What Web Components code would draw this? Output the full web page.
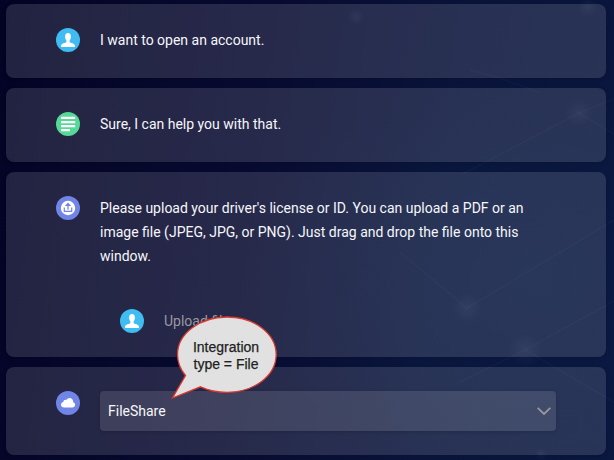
<!DOCTYPE html>
<html lang="en"><head><meta charset="utf-8"><title>Chat</title>
<style>body{margin:0;overflow:hidden}</style></head><body>
<chat-window>
<chat-card><chat-avatar kind="user"></chat-avatar><chat-text>I want to open an account.</chat-text></chat-card>
<chat-card><chat-avatar kind="bot"></chat-avatar><chat-text>Sure, I can help you with that.</chat-text></chat-card>
<chat-card style="--h:185px"><chat-avatar kind="upload"></chat-avatar><chat-text>Please upload your driver's license or ID. You can upload a PDF or an image file (JPEG, JPG, or PNG). Just drag and drop the file onto this window.<upload-row slot="extra">Upload file</upload-row></chat-text></chat-card>
<chat-card style="--h:88px"><chat-avatar kind="cloud"></chat-avatar><share-select>FileShare</share-select></chat-card>
<callout-bubble slot="overlay">Integration<br>type = File</callout-bubble>
</chat-window>
<script>
const define = (name, html, setup) => customElements.define(name, class extends HTMLElement {
  constructor() {
    super();
    this.attachShadow({mode: 'open'}).innerHTML = html;
  }
  connectedCallback() { if (setup) setup(this); }
});

define('chat-window', `<style>
:host{display:block;position:relative;box-sizing:border-box;width:614px;height:460px;overflow:hidden;color:#f6f7fa;font:14px/24px Roboto,sans-serif;
background:linear-gradient(97deg,#020325 0,#050629 10%,#080b31 40%,#0a143b 70%,#0a163e 100%)}
.sky{position:absolute;inset:0}
.list{position:relative;display:flex;flex-direction:column;gap:10px;padding:4px 8px 0 6px}
</style>
<svg class="sky" width="614" height="460" viewBox="0 0 614 460">
<defs><radialGradient id="s"><stop stop-color="#6870a0" stop-opacity=".11"/><stop offset="1" stop-color="#6870a0" stop-opacity="0"/></radialGradient>
<radialGradient id="g"><stop stop-color="#0d2d58" stop-opacity=".25"/><stop offset="1" stop-color="#0d2d58" stop-opacity="0"/></radialGradient></defs>
<ellipse cx="530" cy="280" rx="280" ry="220" fill="url(#g)"/>
<g fill="none" stroke="#53679c" stroke-opacity=".07" stroke-width="1.500"><path d="M470 70L500 78 540 93M579 113L614 134M579 113L614 99M579 113L463 174M400 252L467 308 614 220M525 350L614 402M525 350L614 301M525 350L460 382"/></g>
<g fill="url(#s)"><circle cx="588" cy="7" r="10"/><circle cx="579" cy="113" r="14"/><circle cx="467" cy="308" r="15"/><circle cx="525" cy="350" r="17"/><circle cx="356" cy="17" r="9"/><circle cx="541" cy="454" r="6"/></g>
</svg>
<div class="list"><slot></slot></div><slot name="overlay"></slot>`);

define('chat-card', `<style>
:host{display:flex;align-items:flex-start;gap:20px;box-sizing:border-box;height:var(--h,74px);padding:24px 50px;border-radius:8px;background:rgba(255,255,255,.125);box-shadow:0 1px 5px rgba(0,0,0,.16)}
</style><slot></slot>`);

const person = '<circle cx="12" cy="12" r="12" fill="#3fbdf2"/><path fill="#fff" d="M12 5c1.900 0 2.900 1.400 2.900 3.500 0 1.800-.5 3.100-1.300 4v1.400c.4 1 5.400 1.200 5.400 4v1.100H5v-1.100c0-2.800 5-3 5.400-4v-1.400c-.8-.9-1.300-2.200-1.300-4C9.100 6.400 10.100 5 12 5z"/>';
const glyphs = {
  user: person,
  bot: '<circle cx="12" cy="12" r="12" fill="#56d897"/><path fill="#fff" d="M5 4.800h14.200v2.300H5zM5 8.900h14.200v2.300H5zM5 12.900h14.200v2.300H5zM5 17h9v2.200H5z"/>',
  upload: '<circle cx="12" cy="12" r="12" fill="#7185e8"/><circle cx="12" cy="12" r="7.200" fill="#fff"/><g fill="none" stroke="#7185e8" stroke-width="1.200"><path d="M12 13.800V8.500M8.300 11.600v3.800h7.400v-3.800"/></g><path fill="#7185e8" d="M12 6.600l3.200 3.400H8.800z"/>',
  cloud: '<circle cx="12" cy="12" r="12" fill="#7185e8"/><path fill="#fff" d="M8.200 16.500C6.300 16.500 5 15.300 5 13.700c0-1.400 1-2.500 2.400-2.700-.1-1.600 1.600-2.600 2.900-1.900C11 7.700 12.200 7 13.500 7c2 0 3.500 1.400 3.700 3.300 0 .3 0 .6-.1.900 1.300.3 2 1.200 2 2.500 0 1.600-1.200 2.800-2.900 2.800z"/>'
};
define('chat-avatar', `<style>:host{display:block;flex:none;width:24px;height:24px}svg{display:block}</style><svg width="24" height="24" viewBox="0 0 24 24"></svg>`,
  el => { el.shadowRoot.querySelector('svg').innerHTML = glyphs[el.getAttribute('kind')]; });

define('chat-text', `<style>:host{display:block;flex:1;max-width:440px}</style><slot></slot><slot name="extra"></slot>`);

define('upload-row', `<style>:host{display:flex;gap:20px;margin:41px 0 0 20px;color:#98989e}</style><chat-avatar kind="user"></chat-avatar><span><slot></slot></span>`);

define('share-select', `<style>
:host{display:flex;flex:1;align-items:center;justify-content:space-between;box-sizing:border-box;height:40px;padding:0 5px 0 8px;border-radius:4px;background:rgba(255,255,255,.115);box-shadow:0 1px 4px rgba(0,0,0,.18)}
svg{display:block}</style><span><slot></slot></span>
<svg width="14" height="8" viewBox="0 0 14 8"><path d="M.7.8L7 7 13.300.8" fill="none" stroke="#98989a" stroke-width="1.800"/></svg>`);

define('callout-bubble', `<style>
:host{position:absolute;left:170px;top:315px;width:110px;height:86px;color:#222;font:14px/17px "Liberation Sans",Arial,sans-serif;text-align:center}
svg{position:absolute;inset:0}.t{position:absolute;left:2px;right:0;top:24px;white-space:nowrap;-webkit-text-stroke:.25px #222}</style>
<svg width="110" height="86" viewBox="0 0 110 86"><path d="M15.500 60.500C10.500 54.500 7.500 47.500 7.500 39.500 7.500 18.700 29.600 2 57 2s49.200 16.700 49.200 37.500S84.400 77.300 57 77.300c-9.800 0-18.800-2-26.500-5.500L2.500 83z" fill="#e1e1e1" stroke="#db392f" stroke-width="1.300"/></svg>
<div class="t"><slot></slot></div>`);
</script></body></html>
